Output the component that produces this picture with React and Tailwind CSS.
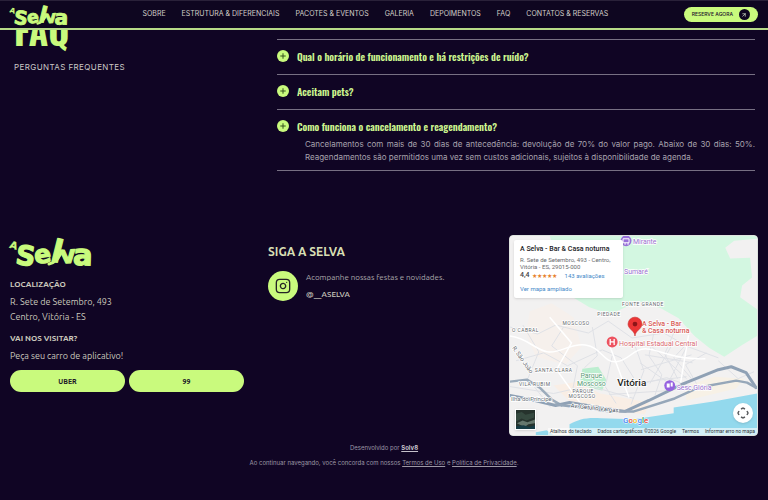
import { useState } from "react";
import { Instagram, Plus, ArrowUpRight } from "lucide-react";

const navLinks = [
  { label: "SOBRE", href: "#sobre" },
  { label: "ESTRUTURA & DIFERENCIAIS", href: "#estrutura" },
  { label: "PACOTES & EVENTOS", href: "#pacotes" },
  { label: "GALERIA", href: "#galeria" },
  { label: "DEPOIMENTOS", href: "#depoimentos" },
  { label: "FAQ", href: "#faq" },
  { label: "CONTATOS & RESERVAS", href: "#contatos" },
];

const faqs = [
  { question: "Qual o horário de funcionamento e há restrições de ruído?" },
  { question: "Aceitam pets?" },
  {
    question: "Como funciona o cancelamento e reagendamento?",
    answer:
      "Cancelamentos com mais de 30 dias de antecedência: devolução de 70% do valor pago. Abaixo de 30 dias: 50%. Reagendamentos são permitidos uma vez sem custos adicionais, sujeitos à disponibilidade de agenda.",
  },
];

function Logo({ className }) {
  return (
    <svg viewBox="0 0 81 32" className={className} overflow="visible" role="img" aria-label="A Selva">
      <g
        fill="#c9fa7d"
        stroke="#c9fa7d"
        strokeLinejoin="round"
        fontFamily="'DejaVu Sans', sans-serif"
        fontWeight="700"
      >
        <text x="0" y="14" fontSize="10" strokeWidth="0.3" transform="rotate(18 4 10)">A</text>
        <g strokeWidth="1.2">
          <text x="6" y="30" fontSize="27" transform="rotate(8 15 20)">S</text>
          <text x="24" y="28" fontSize="25" transform="rotate(-8 32 20)">e</text>
          <text x="42" y="27" fontSize="31" transform="rotate(14 47 16)">l</text>
          <path d="M39 29c6-1 10-6 13-13" fill="none" strokeWidth="3" strokeLinecap="round" />
          <text x="50" y="28" fontSize="24" transform="rotate(-4 58 20)">v</text>
          <text x="63" y="30" fontSize="29" transform="rotate(2 72 22)">a</text>
        </g>
      </g>
    </svg>
  );
}

function Header() {
  return (
    <header className="sticky top-0 z-20 flex h-[30px] items-center justify-between border-t border-b-2 border-t-[#292139] border-b-[#b7da88] bg-[#0e0620] px-2.5">
      <a href="#top">
        <Logo className="h-[23px] w-[57px]" />
      </a>
      <nav className="flex gap-4 text-[7px] text-[#d3d0c9]">
        {navLinks.map((link) => (
          <a key={link.label} href={link.href} className="whitespace-nowrap">
            {link.label}
          </a>
        ))}
      </nav>
      <button className="flex h-[15px] items-center gap-1.5 rounded-full bg-[#c9fa7d] pr-2 pl-2 text-[5px] font-medium whitespace-nowrap text-[#1a0f2b]">
        RESERVE AGORA
        <span className="flex size-[11px] items-center justify-center rounded-full bg-[#0e0620] text-[#c9d6c0]">
          <ArrowUpRight className="size-1.5" strokeWidth={3} />
        </span>
      </button>
    </header>
  );
}

function FaqItem({ item }) {
  const [open, setOpen] = useState(Boolean(item.answer));

  return (
    <div className="border-b border-[#777083] pt-1.5 pb-2">
      <button
        onClick={() => setOpen(!open)}
        aria-expanded={open}
        className="flex h-5 w-full items-center gap-2 text-left"
      >
        <span className="flex size-3 shrink-0 items-center justify-center rounded-full bg-[#c9fa7d] text-[#35531f]">
          <Plus className="size-2" strokeWidth={3} />
        </span>
        <span className="font-['Oswald','Liberation_Sans_Narrow',sans-serif] text-[10px] font-semibold text-[#cdf590]">
          {item.question}
        </span>
      </button>
      {open && item.answer && (
        <p className="-mb-0.5 ml-7 pt-0.5 text-justify text-[8px] leading-[13px] text-[#a8a3ae]">{item.answer}</p>
      )}
    </div>
  );
}

function Faq() {
  return (
    <section id="faq" className="-mt-4 grid grid-cols-[11fr_20fr] pr-[13px] pl-3.5">
      <div>
        <h2 className="font-['Oswald','Liberation_Sans_Narrow',sans-serif] text-[36px] leading-8 font-bold text-[#c9fa7d]">
          FAQ
        </h2>
        <p className="mt-[15px] text-[8px] leading-3 tracking-wider text-[#cbc8c6]">PERGUNTAS FREQUENTES</p>
      </div>
      <div className="mt-[25px] border-t border-[#777083]">
        {faqs.map((item) => (
          <FaqItem key={item.question} item={item} />
        ))}
      </div>
    </section>
  );
}

function Map() {
  return (
    <div className="relative h-[201px] overflow-hidden rounded border border-[#dfe4df] bg-[#f3f2f1] font-['Roboto',sans-serif]">
      <svg viewBox="0 0 249 201" preserveAspectRatio="xMidYMid slice" className="size-full">
        <rect width="249" height="201" fill="#f2f1f1" />
        {/* hills and parks */}
        <path d="M0 0H249V3L226 5L217 12L222 23L242 22L244 42L234 50L232 62L249 74V101L234 110L216 122L201 113L186 101L170 83L152 73L130 66L101 79L80 72L60 60L40 0Z" fill="#d3f7e1" />
        <path d="M20 76l22-8 22 14 8 30-16 18-30-8-10-24z" fill="#f6f0ec" />
        <path d="M73 134l16-2 8 13-4 11-14-3-8-8z" fill="#bdeed0" />
        <path d="M44 151l24-4 23 12 49 9-4 12-70-7z" fill="#f9eee5" />
        <path d="M176 152l30-10 30 2-8 10-50 12z" fill="#f7f1e6" />
        {/* streets */}
        <g fill="none" stroke="#dfe1e6" strokeWidth="1">
          <path d="M0 92l28 7 18-9 33 8 20-12 24 17 32-5 25 14 30 11" />
          <path d="M6 126l28-8 24 13 35-16 19 8 17 27 29-7 30 11" />
          <path d="M13 90l16 27-11 27 23 29M54 92l-12 19 26 20-5 25" />
          <path d="M83 92l5 29-13 12M103 121l-7 31 11 17M125 108l10 28-13 34" />
          <path d="M145 98l-5 23 13 19-7 21M165 98l-9 21 13 25M181 106l-16 17 18 21M198 118l-21 12 11 19" />
          <path d="M136 120l48 8M132 135l51-15M115 150l63-8M100 160l60-4M0 152l44 7 35-8 46 13" />
          <path d="M140 109l38 35M131 128l34 24M165 107l-24 42M178 112l-22 43M210 126l20 18 16-7" />
        </g>
        <g fill="none" stroke="#fff" strokeWidth="1.5">
          <path d="M0 101c18 2 25 14 38 16s22-9 38-7 18 18 31 17 17-14 31-13 27 11 59 10" />
          <path d="M40 82l22 26-15 27 27 38M101 112l19 51M180 100l-8 48" />
        </g>
        {/* bay */}
        <path d="M60 190C70 185 76 183 92 184L125 185L165 179V173L205 167L249 159V201H60Z" fill="#93d9ed" />
        <path d="M26 198l11-2 7 5H26z" fill="#93d9ed" />
        {/* highways */}
        <g fill="none" strokeLinecap="round" strokeLinejoin="round">
          <path d="M0 147L17 145L30 153L42 165L52 171" stroke="#9babbb" strokeWidth="2.5" />
          <path d="M0 161L21 165L46 171L60 168L90 173L116 177L140 166L175 149L210 135L223 132L238 138L248 153" stroke="#8fa1b5" strokeWidth="3" />
          <path d="M46 170L71 173L100 177L125 177L166 164L190 153L228 146L239 148L248 153" stroke="#96a7b9" strokeWidth="2.5" />
        </g>
        <g fill="#63676b" stroke="#fff" strokeWidth="1.5" paintOrder="stroke" fontSize="5" letterSpacing="0.5">
          <text x="113" y="71">FONTE GRANDE</text>
          <text x="88" y="81">PIEDADE</text>
          <text x="53" y="90">MOSCOSO</text>
          <text x="2" y="97">O CABRAL</text>
          <text x="25" y="137">SANTA CLARA</text>
          <text x="9" y="151">VILA RUBIM</text>
          <text x="63" y="158">PARQUE</text>
          <text x="59" y="164">MOSCOSO</text>
        </g>
        <g stroke="#fff" strokeWidth="1.5" paintOrder="stroke">
          <text x="1" y="167" fontSize="6" fill="#68717b">Ilha do Príncipe</text>
          <text x="61" y="173" fontSize="6" fill="#414b58" transform="rotate(6 61 173)">Av. Getúlio Vargas</text>
          <text x="2" y="113" fontSize="6" fill="#63676b" transform="rotate(55 2 113)">R. São João</text>
          <text x="82" y="143" fontSize="7" fill="#579b75" textAnchor="middle">Parque</text>
          <text x="82" y="151" fontSize="7" fill="#579b75" textAnchor="middle">Moscoso</text>
          <text x="108" y="151" fontSize="10" fontWeight="500" fill="#1d1e20">Vitória</text>
          <text x="133" y="91" fontSize="7" fontWeight="500" fill="#d75a55">A Selva - Bar</text>
          <text x="133" y="98" fontSize="7" fontWeight="500" fill="#d75a55">& Casa noturna</text>
          <text x="110" y="111" fontSize="7" fill="#d96a70">Hospital Estadual Central</text>
          <text x="124" y="8" fontSize="7" fill="#9870cf">Mirante</text>
          <text x="115" y="39" fontSize="7" fill="#9870cf">Sumaré</text>
          <text x="168" y="155" fontSize="7" fill="#9870cf">Sesc Glória</text>
        </g>
        {/* pins */}
        <circle cx="117" cy="5" r="5.5" fill="#9870d9" />
        <path d="M114 3h6v4h-6zM116 7v2M119 7v2" fill="none" stroke="#fff" />
        <circle cx="103" cy="107" r="5.5" fill="#ed5360" />
        <path d="M101 104v6M105 104v6M101 107h4" fill="none" stroke="#fff" strokeWidth="1.3" />
        <circle cx="161" cy="151" r="5.5" fill="#9662e0" />
        <path d="M158 149h3v4h-3zM162 148h2v4h-2z" fill="#fff" />
        <path d="M126 101c0-5-7-7-7-12a7 7 0 0 1 14 0c0 5-7 7-7 12z" fill="#eb3535" stroke="#c42424" strokeWidth="0.6" />
        <circle cx="126" cy="89" r="2.4" fill="#8d1518" />
        <text x="114" y="189" fontSize="8" fontWeight="500" stroke="#fff" strokeWidth="1" paintOrder="stroke">
          <tspan fill="#4285f4">G</tspan>
          <tspan fill="#ea4335">o</tspan>
          <tspan fill="#fbbc05">o</tspan>
          <tspan fill="#4285f4">g</tspan>
          <tspan fill="#34a853">l</tspan>
          <tspan fill="#ea4335">e</tspan>
        </text>
      </svg>

      <div className="absolute top-1 left-1 h-[58px] w-[109px] rounded-xs bg-white px-1.5 pt-1 text-[6px] leading-[7px] whitespace-nowrap text-[#696b6e] shadow-sm">
        <h4 className="text-[7px] leading-[10px] font-medium text-[#202124]">A Selva - Bar &amp; Casa noturna</h4>
        <p className="mt-0.5">
          R. Sete de Setembro, 493 - Centro,
          <br />
          Vitória - ES, 29015-000
        </p>
        <p className="mt-0.5 flex items-center gap-0.5">
          <span className="text-[7px] font-medium text-[#444]">4,4</span>
          <span className="text-[6px] text-[#e8822e]">★★★★★</span>
          <a href="#avaliacoes" className="ml-1.5 text-[#4589c8]">143 avaliações</a>
        </p>
        <a href="#mapa" className="mt-1.5 block text-[#4589c8]">Ver mapa ampliado</a>
      </div>

      <button
        aria-label="Imagem de satélite"
        className="absolute bottom-[5px] left-[5px] size-[21px] border border-white bg-[#29362f] shadow-sm"
      >
        <svg viewBox="0 0 20 20" preserveAspectRatio="none" className="size-full">
          <path d="M0 0h20v20H0z" fill="#26332d" />
          <path d="M0 4l6-2 4 3 9-2v5l-8 3-5-2-6 3z" fill="#35493f" />
          <path d="M1 14l6-3 5 2 8-3v4l-7 1-4 3z" fill="#65776d" />
          <path d="M0 17l8-1 6 2 6-2v4H0z" fill="#173c45" />
        </svg>
      </button>
      <button
        aria-label="Centralizar mapa"
        className="absolute right-1 bottom-3 flex size-5 items-center justify-center rounded-full bg-white text-[#5b5d60] shadow-sm"
      >
        <svg viewBox="0 0 12 12" className="size-3" fill="none" stroke="currentColor" strokeWidth="1.5">
          <path d="M4 2l2-1 2 1M4 10l2 1 2-1M2 4L1 6l1 2M10 4l1 2-1 2" />
        </svg>
      </button>
      <div className="absolute right-0 bottom-0 flex h-[7px] items-center gap-1.5 bg-white/60 px-0.5 text-[5px] whitespace-nowrap text-[#33373a]">
        <span>Atalhos do teclado</span>
        <span>Dados cartográficos ©2026 Google</span>
        <a href="#termos-mapa">Termos</a>
        <a href="#erro">Informar erro no mapa</a>
      </div>
    </div>
  );
}

function Footer() {
  return (
    <footer id="contatos" className="mt-16 px-2.5 font-['Ubuntu','Noto_Sans',sans-serif] text-[#cbc9bd]">
      <div className="grid grid-cols-[234fr_217fr_249fr] gap-6">
        <div>
          <Logo className="h-8 w-[81px]" />
          <h3 className="mt-3 text-[8px] leading-3 font-semibold">LOCALIZAÇÃO</h3>
          <address className="mt-1 text-[9px] leading-[15px] not-italic">
            R. Sete de Setembro, 493
            <br />
            Centro, Vitória - ES
          </address>
          <h3 className="mt-2 text-[8px] leading-3 font-semibold">VAI NOS VISITAR?</h3>
          <p className="mt-1 text-[9px] leading-[15px]">Peça seu carro de aplicativo!</p>
          <div className="mt-1.5 grid grid-cols-2 gap-1 text-[7px] font-bold text-[#1a1626]">
            <button className="h-[22px] rounded-full bg-[#c9fa7d]">UBER</button>
            <button className="h-[22px] rounded-full bg-[#c9fa7d]">99</button>
          </div>
        </div>

        <div className="pt-2">
          <h3 className="text-[12px] leading-[18px] font-semibold text-[#d8dfb3]">SIGA A SELVA</h3>
          <div className="mt-2 flex items-center gap-2">
            <a
              href="#instagram"
              aria-label="Instagram"
              className="flex size-[30px] shrink-0 items-center justify-center rounded-full bg-[#c9fa7d] text-[#252326]"
            >
              <Instagram className="size-4" />
            </a>
            <div className="text-[8px] leading-[17px] whitespace-nowrap">
              <p className="text-[#aaa7aa]">Acompanhe nossas festas e novidades.</p>
              <p className="font-medium">@__ASELVA</p>
            </div>
          </div>
        </div>

        <Map />
      </div>

      <div className="mt-1 pb-6 text-center font-['Inter',sans-serif] text-[6px] leading-[15px] text-[#9d98a5]">
        <p>
          Desenvolvido por{" "}
          <a href="#solv8" className="font-bold text-[#c5c1cb] underline">Solv8</a>
        </p>
        <p>
          Ao continuar navegando, você concorda com nossos{" "}
          <a href="#termos" className="underline">Termos de Uso</a> e{" "}
          <a href="#privacidade" className="underline">Política de Privacidade</a>.
        </p>
      </div>
    </footer>
  );
}

export default function App() {
  return (
    <div id="top" className="min-h-screen bg-[#100524] font-['Inter',sans-serif]">
      <Header />
      <main>
        <Faq />
      </main>
      <Footer />
    </div>
  );
}
